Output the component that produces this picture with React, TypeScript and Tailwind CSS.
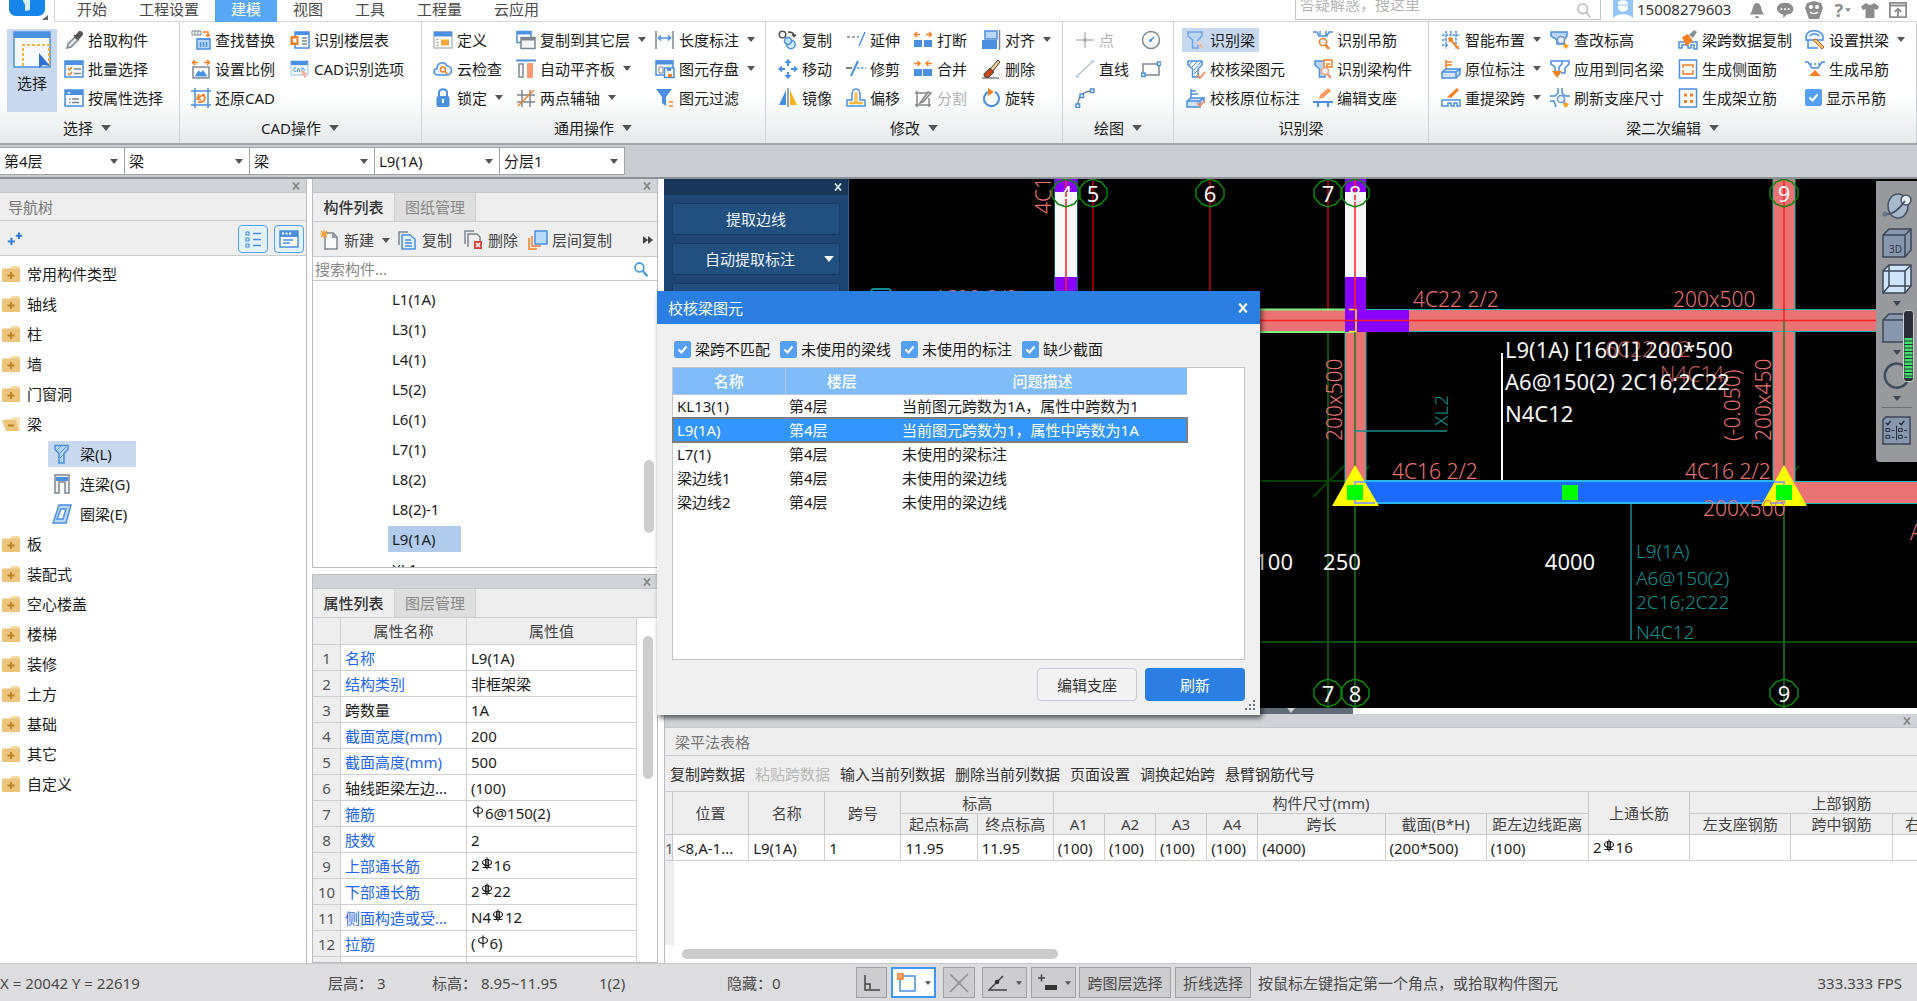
import React from 'react';
import type { ReactNode } from 'react';

const B = '#4a8fe0';
const L = '#b9d6f7';
const O = '#f58026';
const G = '#7d8790';

type IconProps = { children: ReactNode; box?: string; size?: string };
const Ico = ({ children, box = '0 0 20 20', size = 'size-5' }: IconProps) => (
  <svg viewBox={box} className={`${size} shrink-0`} fill="none" strokeWidth="1.5" aria-hidden="true">
    {children}
  </svg>
);

const Arrow = ({ className = 'h-[5px] w-2 text-[#555]' }: { className?: string }) => (
  <svg viewBox="0 0 8 5" className={`shrink-0 ${className}`} aria-hidden="true">
    <path d="M0 0h8L4 5z" fill="currentColor" />
  </svg>
);

const Cross = ({ className = 'size-2 text-[#858585]' }: { className?: string }) => (
  <svg viewBox="0 0 8 8" className={className} aria-hidden="true">
    <path d="M1 .5l6 7M7 .5l-6 7" stroke="currentColor" strokeWidth="1.8" />
  </svg>
);

const Magnifier = ({ c = O, x = 0, y = 0 }: { c?: string; x?: number; y?: number }) => (
  <g transform={`translate(${x} ${y})`} stroke={c}>
    <circle cx="11" cy="11" r="3.6" fill="#e8f0fb" />
    <path d="M13.5 14l3.5 4" strokeWidth="2.6" />
  </g>
);

const Beam = ({ fill = 'none', c = B }: { fill?: string; c?: string }) => (
  <path d="M2 2h14v4l-4 4v8H6.500v-8L2 6z" fill={fill} stroke={c} />
);

const icons: Record<string, ReactNode> = {
  pick: <Ico><path d="M3 18l1-4 7-7 3 3-7 7z" fill="#dfe5ea" stroke={G} /><path d="M10 5l5 5M11 7l4-5c2-1 4 1 3 3l-4 4z" fill="#555" stroke="#555" /></Ico>,
  batch: <Ico><path d="M1 2h18v16H1z" stroke={B} /><path d="M1 2h18v4H1z" fill={B} /><path d="M10 10h7M10 14.500h7" stroke={G} /><path d="M4 9.500l1.500 1.500 2.500-3M4 14.500l1.500 1.500 2.500-3" stroke={O} /></Ico>,
  prop: <Ico><path d="M1 2h18v16H1z" stroke={B} /><path d="M1 2h18v5H1z" fill={B} /><path d="M3 4h4L5 6z" fill="#fff" /><path d="M8 11h7M8 14.500h7" stroke={G} /><path d="M5 11h1.500M5 14.500h1.500" stroke={G} /></Ico>,
  find: <Ico><path d="M1 1h9v4H1zM4 1v4M7 1v4" stroke={G} strokeWidth="1" /><path d="M12 2h5v4M15 4.500l2 2 2-2" stroke={O} /><path d="M6 9h13v10H6z" fill={L} stroke={B} /><path d="M6 9h13M9.500 12v5M12.500 12v5M15.500 12v5" stroke={B} /></Ico>,
  scale: <Ico><path d="M2 3.500h5M18 3.500h-5M4 1L1.500 3.500 4 6M16 1l2.500 2.500L16 6" stroke={O} /><path d="M2 8h16v11H2z" stroke={G} fill="#fff" /><path d="M3.500 17.500l4-6 2.500 2 2-2.500 4.500 6.500z" fill={B} /></Ico>,
  restore: <Ico><path d="M4 0v20M0 3h20M17 0v20M0 17h20" stroke={B} /><path d="M7 14c6 1 8-2 6-7M13.500 6L7 10M8 6l-2 5 4 1" stroke={O} strokeWidth="1.800" /></Ico>,
  floor: <Ico><path d="M5 2h14v16H5z" fill="#fff" stroke={B} /><path d="M5 2h14v3H5z" fill={B} /><path d="M12 8h5M12 11h5M12 14h5" stroke={G} /><path d="M.5 6h8v9h-8z" fill={O} /><path d="M3 8.500h3.500v4H3z" fill="#fff" /></Ico>,
  cadopt: <Ico><path d="M1 2h17v14H1z" fill="#eef5fd" stroke={L} /><path d="M1 2h17v4H1z" fill={B} /><path d="M6 9c-3-1-3 4 0 3.500M7 13l1.500-4 1.500 4M12 9v4c3 0 3-4 0-4" stroke={B} strokeWidth="1" /><path d="M12 11l6 4-3 .5 1.500 3-2 .5-1-3-2 1z" fill="#f8b69a" /></Ico>,
  define: <Ico><path d="M1 2h18v16H1z" fill="#fff" stroke="#b5bcc4" /><path d="M1 1.500h18v5H1z" fill={B} /><path d="M8 9.500h8v6H8z" fill="#f5a93a" /><path d="M3 9.500h3M3 12.500h3M3 15.500h3" stroke="#bbb" /></Ico>,
  cloud: <Ico><path d="M5 16c-5 0-5-6-1-6.500C4 3 12 2 14 7c6 0 6 9 0 9z" fill="#eef6ff" stroke={B} /><circle cx="10" cy="10.500" r="2.500" stroke={O} /><path d="M12 12.500l2.500 2.500" stroke={O} /></Ico>,
  lock: <Ico><path d="M6 9V5c0-5 8-5 8 0v4" stroke={B} strokeWidth="2" /><rect x="3.500" y="8" width="13" height="11" rx="2" fill={B} /><path d="M10 11v4" stroke="#fff" strokeWidth="2" /></Ico>,
  layers: <Ico><path d="M1 1.500h14v11H1z" fill="#fff" stroke={B} /><path d="M1 1.500h14v3H1z" fill={B} /><path d="M5 7.500h14v11H5z" fill="#f3f5f7" stroke={G} /><path d="M5 7.500h14v3H5z" fill={G} /></Ico>,
  align: <Ico><path d="M0 1.500h20" stroke={B} strokeWidth="2" /><path d="M3 5h4v13H3z" stroke={G} /><path d="M11 4h6v15h-6z" fill="#fb9a70" /></Ico>,
  axis: <Ico><path d="M6 2v17M14 2v17M1 7h18M1 14h18" stroke={G} /><path d="M2 18L18 2" stroke={O} /></Ico>,
  length: <Ico><path d="M1 1v18M18 1v18" stroke={G} /><path d="M4 8h11M6 5.500L3.500 8 6 10.500M13 5.500L15.500 8 13 10.500" stroke={B} /></Ico>,
  save: <Ico><path d="M1 2h17v14H1z" stroke={B} fill="#fff" /><path d="M1 1.500h17v4H1z" fill={B} /><path d="M4 8h4v6H4z" stroke={G} strokeWidth="1" /><path d="M9.500 9h9.500v9.500H9.500z" fill="#fff" stroke={B} /><path d="M12 9h4v3h-4z" fill={B} /><path d="M13 15h4v3h-4z" fill={O} /></Ico>,
  filter: <Ico><path d="M1 1h16l-6 8v9l-4-3V9z" fill={B} /><path d="M14 14h4M14 18h4" stroke={O} /></Ico>,
  copy: <Ico><circle cx="4.500" cy="4.500" r="3.300" stroke="#555" /><path d="M10 2c4 0 6 1 6 4M14 4.500l2 2 2-2" stroke="#444" /><circle cx="13" cy="14.500" r="4.200" fill="#d5ecff" stroke={B} /><circle cx="10" cy="11" r="3.500" fill="#bfe0fb" stroke={B} /></Ico>,
  extend: <Ico><path d="M1 7h12" stroke={G} strokeDasharray="3 2" /><path d="M13 16l6-14" stroke={B} /></Ico>,
  break: <Ico><path d="M1 4.500h6M4 2L1.500 4.500 4 7M19 4.500h-6M16 2l2.500 2.500L16 7" stroke={O} /><path d="M1 10h8v7H1zM11 10h8v7h-8z" fill={B} /></Ico>,
  justify: <Ico><path d="M4 1h12v8H4z" fill={L} stroke={B} /><path d="M1 10h15v9H1z" fill={B} /><path d="M18.500 0v20" stroke={G} /></Ico>,
  move: <Ico><path d="M10 1v6M10 13v6M1 10h6M13 10h6" stroke={B} strokeWidth="2" /><path d="M10 0l3.500 4h-7zM10 20l3.500-4h-7zM0 10l4-3.500v7zM20 10l-4-3.500v7z" fill={B} /></Ico>,
  trim: <Ico><path d="M0 9h6" stroke="#555" /><path d="M11 9h9" stroke={B} strokeDasharray="2.500 1.500" /><path d="M5 17l7-15" stroke={B} strokeWidth="2" /></Ico>,
  merge: <Ico><path d="M1 4.500h6M4.500 2L7 4.500 4.500 7M19 4.500h-6M15.500 2L13 4.500 15.500 7" stroke={O} /><path d="M1 10h8v7H1zM10 10h9v7h-9z" fill={B} /></Ico>,
  erase: <Ico><path d="M1 19h17" stroke={G} /><path d="M17 1l2 2-7 9-3-2z" fill="#f0c992" stroke="#444" strokeWidth="1" /><path d="M9 9l4 4-5 5c-6 2-6-4-3-5z" fill="#c4491d" stroke="#444" strokeWidth="1" /></Ico>,
  mirror: <Ico><path d="M8 2v15H1z" fill={B} /><path d="M12 2v15h7z" fill="#f8b01c" /><path d="M10 0v19" stroke={G} /></Ico>,
  offset: <Ico><path d="M1 18v-6h5V7c0-8 8-8 8 0v5h5v6z" fill="#fff" stroke={B} /><path d="M4 15.500v-1h5V7c0-3 2-3 2 0v7.500h5v1z" stroke="#f5b53c" /></Ico>,
  split: <Ico><path d="M2 5h16M2 17h16M4 3v16M16 10v9" stroke="#888" /><path d="M7 15l8-11 3 1-8 9z" fill="#ddd" stroke="#888" /></Ico>,
  rotate: <Ico><path d="M7 4a7.500 7.500 0 1 0 7 0" stroke={B} strokeWidth="2" /><path d="M7 0l6 4-6 4z" fill={O} /></Ico>,
  point: <Ico><path d="M10 2v16M1 10h18" stroke="#bbb" /><circle cx="10" cy="10" r="2" fill="#aaa" /></Ico>,
  line: <Ico><path d="M2 17L17 3" stroke="#b8c0c8" /><path d="M1 16h3v3H1zM16 1h3v3h-3z" fill={L} /></Ico>,
  arc: <Ico><path d="M3 17C3 9 8 3 17 3" stroke={G} /><path d="M1 16h3.500v3.500H1zM15.500 1H19v3.500h-3.500zM5 6h3.500v3.500H5z" fill="#fff" stroke={B} /></Ico>,
  circle: <Ico><circle cx="10" cy="10" r="8.500" stroke={G} /><path d="M10 10l3-3" stroke={B} /><circle cx="9.500" cy="10.500" r="1.500" fill={B} /></Ico>,
  rect: <Ico><path d="M2 5h16v11H2z" stroke={G} /><path d="M16.500 3H20v3.500h-3.500zM.5 14H4v3.500H.5z" fill="#fff" stroke={B} /></Ico>,
  idBeam: <Ico><g opacity=".7"><Beam fill={L} /></g><circle cx="13" cy="13" r="2" fill="#fbd3c2" /><path d="M13.500 14l3 4" stroke="#f8b69a" strokeWidth="2" /></Ico>,
  checkBeam: <Ico><Beam fill="#fff" /><path d="M3 6l4-4M6 8l6-6M8 11l7-8M8 15l3-3" stroke={B} strokeWidth="1" /><path d="M11 16l3 3 5-6" stroke="#f58a62" strokeWidth="1.800" /></Ico>,
  checkMark: <Ico><path d="M5 1v9M5 3h5M5 6h7" stroke={B} /><path d="M1 13l4-3h12l-3 3v6H1zM1 13h13l4-3v5" fill="#cfe2f8" stroke={B} /><path d="M11 15l3 3 5-6" stroke="#f58a62" strokeWidth="1.800" /></Ico>,
  idHanger: <Ico><path d="M0 2h4l2 4h8l2-4h4M7 1v4M13 1v4" stroke={B} /><Magnifier y={1} x={-1} /></Ico>,
  idMember: <Ico><Beam fill={L} /><path d="M11 9V1h8v7h-5V5h3" stroke={O} fill="#fff" /><Magnifier x={1} y={1} c="#f59b76" /></Ico>,
  editSup: <Ico><path d="M0 14h20M5 14v5M15 14v5" stroke={B} strokeWidth="2" /><path d="M6 11l1-4 8-7 3 3-8 7z" fill="#f59b60" /></Ico>,
  smart: <Ico><path d="M5 1v18M10 1v5M15 1v18M1 5h18M1 10h5M1 15h7" stroke={B} strokeDasharray="2.500 1" /><path d="M8 8l10 11M8 8l4 1M8 8l1 4" stroke={O} strokeWidth="2" /></Ico>,
  origin: <Ico><path d="M5 1v9M5 3h6M5 6h6" stroke={O} /><path d="M1 13l4-3h14l-4 3v6H1zM1 13h14l4-3v5l-4 4" fill="#cfe2f8" stroke={B} /></Ico>,
  respan: <Ico><path d="M1 18v-6h18v6h-3v-3h-3v3h-3v-3H7v3z" fill="#fff" stroke={B} /><path d="M6 9l10-9 2 2-8 8z" fill={O} /></Ico>,
  elev: <Ico><path d="M1 2h16v4l-3 4v4H7v-4L1 6z" fill={L} stroke={B} /><Magnifier y={-1} c="#7592c4" /><path d="M15 13l4 3-3 3-3-3z" fill="#f7a520" /></Ico>,
  apply: <Ico><path d="M1 2h11v3l-3 3v5H5V8L1 5zM9 2h10v3l-4 4v5h-4" fill="#fff" stroke={B} /><path d="M2 12h10l-5 7z" fill={O} /></Ico>,
  refresh: <Ico><path d="M8 0v5l-3 3H0M12 0v5l3 3h5M0 13h4l2 6M8 3v3M12 3v3" stroke={B} /><Magnifier c="#6d93d6" /><path d="M15 14l4 2-3 4-3-3z" fill="#f7a520" /></Ico>,
  spanCopy: <Ico><path d="M1 18v-6h18v7h-3v-4h-3v3h-3v-3H4v3z" fill="#fff" stroke={B} /><path d="M4 7l6-3 5 7-7 5z" fill={O} /><path d="M11 5l5-5 3 2-4 6z" fill="#8a9299" /></Ico>,
  side: <Ico><path d="M1.500 1h17v18h-17z" stroke={B} fill="#fff" /><path d="M5 9V6h10v3M5 11v4h10v-4" stroke={O} /></Ico>,
  stand: <Ico><path d="M1.500 1h17v18h-17z" stroke={B} fill="#fff" /><path d="M6 5.500h3v3H6zM12 5.500h3v3h-3zM6 12h3v3H6zM12 12h3v3h-3z" fill={O} /></Ico>,
  arch: <Ico><path d="M1 6c2-7 14-7 17 0v4H1zM5 6c2-3 7-3 9 0M3 10v8h10" fill="#eef6ff" stroke={B} /><path d="M8 10l3-1 8 8-2 2z" fill="#f7c87a" stroke="#c55b1c" strokeWidth="1" /></Ico>,
  hanger: <Ico><path d="M0 3h3l4 6h6l4-6h3M6 4v2M10 4v2M14 4v2" stroke={B} /><path d="M10 11l6 6H4z" fill={O} /></Ico>,
};

type Item = { icon: string; label?: string; arrow?: boolean; off?: boolean; on?: boolean };
type Column = { w: string; items: Item[] };

const RibbonButton = ({ icon, label, arrow, off, on }: Item) => (
  <div className="flex h-[29px] items-center">
    <button
      aria-label={label ?? icon}
      className={`-mx-1 flex h-6 items-center gap-1 px-1 whitespace-nowrap ${off ? 'text-[#aeb0b2]' : ''} ${on ? 'bg-[#c8d8ee]' : ''}`}
    >
      {icons[icon]}
      {label}
      {arrow && <span className="ml-1"><Arrow /></span>}
    </button>
  </div>
);

const Group = ({ title, cls, cols, lead, noArrow, tail }: { title: string; cls: string; cols: Column[]; lead?: ReactNode; noArrow?: boolean; tail?: ReactNode }) => (
  <section className={`flex shrink-0 flex-col border-r border-[#cfd3d6] pt-[3px] ${cls}`}>
    <div className="flex h-[88px]">
      {lead}
      {cols.map((c, i) => (
        <div key={i} className={`shrink-0 ${c.w}`}>
          {c.items.map((it) => <RibbonButton key={it.icon} {...it} />)}
          {i === cols.length - 1 && tail}
        </div>
      ))}
    </div>
    <div className="-ml-3 flex h-[30px] items-center justify-center gap-2">
      {title}
      {!noArrow && <Arrow className="h-1.5 w-2.5 text-[#555]" />}
    </div>
  </section>
);

const Check = ({ label }: { label: string }) => (
  <label className="relative flex items-center gap-1 whitespace-nowrap">
    <input type="checkbox" defaultChecked className="size-[17px] appearance-none rounded-xs bg-[#55a0f5]" />
    <svg viewBox="0 0 17 17" className="pointer-events-none absolute left-0 size-[17px]" fill="none" aria-hidden="true">
      <path d="M4.500 8.500l3 3 5-6" stroke="#fff" strokeWidth="2" />
    </svg>
    {label}
  </label>
);

const PanelStrip = () => (
  <div className="flex h-[14px] shrink-0 items-center justify-end border-b border-[#c4c6ca] bg-[#d2d3d8] pr-1.5">
    <button aria-label="关闭"><Cross /></button>
  </div>
);

const tabs = ['开始', '工程设置', '建模', '视图', '工具', '工程量', '云应用'];

const TopBar = () => (
  <header className="flex h-[22px] shrink-0">
    <div className="relative flex w-[54px] shrink-0 items-start justify-center">
      <svg viewBox="0 0 36 16" className="h-4 w-9 shrink-0" aria-hidden="true">
        <path d="M0 0h36v9c0 4-3 7-7 7H7c-4 0-7-3-7-7z" fill="#1585ea" />
        <path d="M14 0c0 3 2 3 2 5v6l5-1V0z" fill="#d8eeff" />
      </svg>
      <svg viewBox="0 0 6 5" className="absolute right-1.5 bottom-0.5 h-[5px] w-1.5" aria-hidden="true"><path d="M6 0v5H0z" fill="#666" /></svg>
    </div>
    <nav className="flex min-w-0 flex-1 items-start border-b border-l border-[#d3d5d8] pl-[6px]">
      {tabs.map((t) => (
        <button key={t} className={`h-[22px] px-4 pb-1 leading-[18px] ${t === '建模' ? 'bg-[#58a7f6] text-white' : 'text-[#4a4a4a]'}`}>{t}</button>
      ))}
    </nav>
    <div className="flex items-start border-b border-[#d3d5d8] pr-2.5">
      <label className="flex h-[20px] w-[306px] items-center border border-t-0 border-[#c3c5c8] pr-2">
        <input aria-label="搜索" placeholder="答疑解惑，搜这里" className="-mt-3 h-5 min-w-0 flex-1 px-1 placeholder:text-[#b5b5b5]" />
        <Ico size="size-4"><circle cx="8.500" cy="8.500" r="6" stroke="#bbb" strokeWidth="2" /><path d="M13 13l5 6" stroke="#bbb" strokeWidth="2" /></Ico>
      </label>
      <svg viewBox="0 0 20 18" className="ml-3 h-[18px] w-5" aria-hidden="true">
        <path d="M0 0h20v18H0z" fill="#93c6fa" /><path d="M5 4c0-5 10-5 10 0v4c-1 5-9 5-10 0zM1 18c1-5 17-5 18 0z" fill="#fff" /><path d="M5 5h10" stroke="#93c6fa" />
      </svg>
      <span className="ml-1 leading-[18px] text-[#333]">15008279603</span>
      <div className="ml-[17px] flex items-center gap-2.5 text-[#8c8c8c]">
        <button aria-label="通知"><Ico size="size-[18px]"><path d="M2 15c4-3 2-12 8-13 6 1 4 10 8 13zM8 17h4v2H8z" fill="currentColor" /></Ico></button>
        <button aria-label="消息"><Ico size="size-[18px]"><path d="M10 2c12 0 12 13 2 13l-4 4v-4C-2 13-1 2 10 2z" fill="currentColor" /><path d="M5 9h2M9 9h2M13 9h2" stroke="#fff" strokeWidth="2" /></Ico></button>
        <button aria-label="客服"><Ico size="size-[20px]"><path d="M1 8l2-5 7-2 7 2 2 5-4 11H5z" fill="currentColor" /><circle cx="7" cy="7" r="2" fill="#fff" /><circle cx="13" cy="7" r="2" fill="#fff" /><path d="M6 12c2 2 6 2 8 0" stroke="#fff" /></Ico></button>
        <button aria-label="帮助" className="flex items-center gap-0.5 text-lg leading-[18px] font-bold">?<Arrow className="h-1 w-1.5 text-[#8c8c8c]" /></button>
        <button aria-label="皮肤"><Ico size="size-[18px]"><path d="M6 2c1 3 7 3 8 0l6 4-2 4-3-1v10H5V9l-3 1-2-4z" fill="currentColor" /></Ico></button>
        <button aria-label="收起"><Ico size="size-[18px]"><path d="M1 2h18v16H1zM1 5h18M10 17V9M6.500 12L10 8.500l3.500 3.500" stroke="currentColor" strokeWidth="2" /></Ico></button>
      </div>
    </div>
  </header>
);

const Ribbon = () => (
  <div className="flex h-[123px] shrink-0 overflow-hidden border-b-2 border-[#a2a5a9] bg-linear-to-b from-white from-60% to-[#e6eaeb]">
    <Group
      title="选择"
      cls="w-[180px] pl-[7px]"
      lead={
        <button className="mt-1 mr-[7px] flex h-[83px] w-[50px] flex-col items-center bg-[#c8d8ee] pt-0.5">
          <Ico size="size-[38px]" box="0 0 38 38">
            <path d="M1 1h36v35H1z" fill="#f7faff" stroke={B} /><path d="M1 1h36v6H1z" fill={B} />
            <path d="M10 35V14h26v22" stroke="#f5b53c" strokeWidth="2" strokeDasharray="3 2" /><path d="M26 22v15l4-3 7 1z" fill="#2f6fd0" />
          </Ico>
          <span className="mt-1 leading-5">选择</span>
        </button>
      }
      cols={[{ w: 'w-auto', items: [{ icon: 'pick', label: '拾取构件' }, { icon: 'batch', label: '批量选择' }, { icon: 'prop', label: '按属性选择' }] }]}
    />
    <Group
      title="CAD操作"
      cls="w-[242px] pl-[11px]"
      cols={[
        { w: 'w-[99px]', items: [{ icon: 'find', label: '查找替换' }, { icon: 'scale', label: '设置比例' }, { icon: 'restore', label: '还原CAD' }] },
        { w: 'w-auto', items: [{ icon: 'floor', label: '识别楼层表' }, { icon: 'cadopt', label: 'CAD识别选项' }] },
      ]}
    />
    <Group
      title="通用操作"
      cls="w-[344px] pl-[11px]"
      cols={[
        { w: 'w-[83px]', items: [{ icon: 'define', label: '定义' }, { icon: 'cloud', label: '云检查' }, { icon: 'lock', label: '锁定', arrow: true }] },
        { w: 'w-[139px]', items: [{ icon: 'layers', label: '复制到其它层', arrow: true }, { icon: 'align', label: '自动平齐板', arrow: true }, { icon: 'axis', label: '两点辅轴', arrow: true }] },
        { w: 'w-auto', items: [{ icon: 'length', label: '长度标注', arrow: true }, { icon: 'save', label: '图元存盘', arrow: true }, { icon: 'filter', label: '图元过滤' }] },
      ]}
    />
    <Group
      title="修改"
      cls="w-[297px] pl-3"
      cols={[
        { w: 'w-[68px]', items: [{ icon: 'copy', label: '复制' }, { icon: 'move', label: '移动' }, { icon: 'mirror', label: '镜像' }] },
        { w: 'w-[67px]', items: [{ icon: 'extend', label: '延伸' }, { icon: 'trim', label: '修剪' }, { icon: 'offset', label: '偏移' }] },
        { w: 'w-[68px]', items: [{ icon: 'break', label: '打断' }, { icon: 'merge', label: '合并' }, { icon: 'split', label: '分割', off: true }] },
        { w: 'w-auto', items: [{ icon: 'justify', label: '对齐', arrow: true }, { icon: 'erase', label: '删除' }, { icon: 'rotate', label: '旋转' }] },
      ]}
    />
    <Group
      title="绘图"
      cls="w-[111px] pl-3"
      cols={[
        { w: 'w-[66px]', items: [{ icon: 'point', label: '点', off: true }, { icon: 'line', label: '直线' }, { icon: 'arc' }] },
        { w: 'w-auto', items: [{ icon: 'circle' }, { icon: 'rect' }] },
      ]}
    />
    <Group
      title="识别梁"
      noArrow
      cls="w-[255px] pl-3"
      cols={[
        { w: 'w-[127px]', items: [{ icon: 'idBeam', label: '识别梁', on: true }, { icon: 'checkBeam', label: '校核梁图元' }, { icon: 'checkMark', label: '校核原位标注' }] },
        { w: 'w-auto', items: [{ icon: 'idHanger', label: '识别吊筋' }, { icon: 'idMember', label: '识别梁构件' }, { icon: 'editSup', label: '编辑支座' }] },
      ]}
    />
    <Group
      title="梁二次编辑"
      cls="flex-1 pl-3"
      tail={<div className="flex h-[29px] items-center"><Check label="显示吊筋" /></div>}
      cols={[
        { w: 'w-[109px]', items: [{ icon: 'smart', label: '智能布置', arrow: true }, { icon: 'origin', label: '原位标注', arrow: true }, { icon: 'respan', label: '重提梁跨', arrow: true }] },
        { w: 'w-[128px]', items: [{ icon: 'elev', label: '查改标高' }, { icon: 'apply', label: '应用到同名梁' }, { icon: 'refresh', label: '刷新支座尺寸' }] },
        { w: 'w-[127px]', items: [{ icon: 'spanCopy', label: '梁跨数据复制' }, { icon: 'side', label: '生成侧面筋' }, { icon: 'stand', label: '生成架立筋' }] },
        { w: 'w-auto', items: [{ icon: 'arch', label: '设置拱梁', arrow: true }, { icon: 'hanger', label: '生成吊筋' }] },
      ]}
    />
  </div>
);

const pickers = [['楼层', '第4层'], ['构件大类', '梁'], ['构件类型', '梁'], ['构件', 'L9(1A)'], ['分层', '分层1']];

const PickerBar = () => (
  <div className="flex h-[34px] shrink-0 items-center border-b-2 border-[#8d9095] bg-[#c9ccd1]">
    {pickers.map(([name, v]) => (
      <div key={name} className="relative w-[125px] border border-l-0 border-[#a0a3a8]">
        <select aria-label={name} className="block h-[26px] w-full appearance-none bg-white pl-1 leading-[22px]">
          <option>{v}</option>
        </select>
        <span className="pointer-events-none absolute inset-y-0 right-1.5 flex items-center"><Arrow /></span>
      </div>
    ))}
  </div>
);

const Folder = ({ open = false }: { open?: boolean }) => (
  <Ico size="h-4 w-[18px]" box="0 0 18 16">
    {open ? (
      <><path d="M3 3h6l2-2h7v14H4z" fill="#f8e2b4" /><path d="M0 4h14l3 11H4z" fill="#ecc47c" /><path d="M6 9.500h6" stroke="#b98225" strokeWidth="2" /></>
    ) : (
      <><path d="M8 2l2-2h7l1 2v2H8z" fill="#f5dca8" /><rect y="2.500" width="18" height="13.500" rx="1" fill="#ecc47c" /><path d="M5.500 9.500h7M9 6v7" stroke="#b98225" strokeWidth="1.800" /></>
    )}
  </Ico>
);

const before = ['常用构件类型', '轴线', '柱', '墙', '门窗洞'];
const after = ['板', '装配式', '空心楼盖', '楼梯', '装修', '土方', '基础', '其它', '自定义'];
const TreeRow = ({ name, open }: { name: string; open?: boolean }) => (
  <li className="flex h-[30px] items-center gap-[7px] pl-0.5"><Folder open={open} />{name}</li>
);

const subs: [string, ReactNode][] = [
  ['梁(L)', <Ico key="l"><path d="M3 1.500h13v4l-4 4V19H7V9.500l-4-4z" fill={L} stroke={B} /><path d="M5 6l4-4M8 9l6-6M8 14l4-4" stroke={B} strokeWidth="1" /></Ico>],
  ['连梁(G)', <Ico key="g"><path d="M3 1h14v18h-4V8H7v11H3z" fill="#f0f2f4" stroke={G} /><path d="M4 3h12v4H4z" fill={B} /></Ico>],
  ['圈梁(E)', <Ico key="e"><path d="M7 1h12l-5 18H1z" fill={L} stroke={B} /><path d="M9 5h5l-3 10H5z" fill="#fff" stroke={B} /></Ico>],
];

const NavTree = () => (
  <aside className="flex w-[307px] shrink-0 flex-col border-r border-[#b9bcc0] bg-white">
    <PanelStrip />
    <h2 className="flex h-[28px] shrink-0 items-center border-b border-[#c8cace] bg-[#eeeeee] pl-2 text-[#777]">导航树</h2>
    <div className="flex h-[35px] shrink-0 items-center gap-1.5 border-b border-[#c8cace] bg-[#eeeeee] pt-px pr-0.5 pl-[7px]">
      <Ico size="size-4"><path d="M1 13h9M5.500 8.500v9M11 6h8M15 2v8" stroke="#2f7ddb" strokeWidth="2.500" /></Ico>
      <span className="flex-1" />
      <button aria-label="列表" className="flex h-7 w-[30px] items-center justify-center rounded-sm border border-[#55a0f5] bg-[#e4f1ff]">
        <Ico><path d="M3 3h3v3H3zM3 9h3v3H3zM3 15h3v3H3z" stroke={B} strokeWidth="1.200" /><path d="M10 4.500h8M10 10.500h8M10 16.500h8" stroke={B} /></Ico>
      </button>
      <button aria-label="卡片" className="flex h-7 w-[30px] items-center justify-center rounded-sm border border-[#55a0f5] bg-[#e4f1ff]">
        <Ico><path d="M1 2h18v16H1z" fill="#fff" stroke={B} /><path d="M1 2h18v6H1z" fill={B} /><path d="M4 11h10M4 14h7" stroke={B} /><path d="M3 4.500h9" stroke="#fff" strokeWidth="2" strokeDasharray="2 1.500" /></Ico>
      </button>
    </div>
    <ul className="pt-[3px]">
      {before.map((n) => <TreeRow key={n} name={n} />)}
      <TreeRow name="梁" open />
      {subs.map(([n, icon], i) => (
        <li key={n} className="flex h-[30px] items-center pl-12">
          <span className={`flex h-[26px] w-[88px] items-center gap-2 pl-1 ${i === 0 ? 'bg-[#c8d8ee]' : ''}`}>{icon}{n}</span>
        </li>
      ))}
      {after.map((n) => <TreeRow key={n} name={n} />)}
    </ul>
  </aside>
);

const PanelTabs = ({ names }: { names: [string, string] }) => (
  <div className="flex h-[29px] shrink-0 border-b border-[#c8cace] bg-[#eeeeee]" role="tablist">
    <button role="tab" className="w-[81px] font-medium text-[#333]">{names[0]}</button>
    <button role="tab" className="w-[82px] border-x border-[#cfcfcf] bg-[#dedede] text-[#888]">{names[1]}</button>
  </div>
);

const members = ['L1(1A)', 'L3(1)', 'L4(1)', 'L5(2)', 'L6(1)', 'L7(1)', 'L8(2)', 'L8(2)-1', 'L9(1A)', 'XL1'];

const ComponentList = () => (
  <section className="flex h-[389px] shrink-0 flex-col border border-t-0 border-[#b9bcc0] bg-white">
    <PanelStrip />
    <PanelTabs names={['构件列表', '图纸管理']} />
    <div className="flex h-[35px] shrink-0 items-center border-b border-[#c8cace] bg-[#eeeeee] pt-0.5 pr-1 pl-[7px] whitespace-nowrap text-[#444]">
      <button className="flex items-center gap-1"><Ico><path d="M5 3h8l4 4v12H5z" fill="#fafafa" stroke={G} /><path d="M13 3v4h4" stroke={G} /><path d="M4 0v8M0 4h8M1 1l6 6M7 1L1 7" stroke="#f0a030" strokeWidth="1.200" /></Ico>新建<span className="ml-1"><Arrow /></span></button>
      <button className="ml-2 flex items-center gap-1"><Ico><path d="M1 15V2h9" stroke={G} /><path d="M4 5h8l5 4v10H4z" fill="#e3effc" stroke={B} /><path d="M7 10h6M7 13h7M7 16h7" stroke={B} /></Ico>复制</button>
      <button className="ml-3 flex items-center gap-1"><Ico><path d="M1 14V1h9M4 17V4h9l3 3v4" stroke={G} /><path d="M10 11h8v8h-8z" fill="#d6463f" /><path d="M12 13l4 4M16 13l-4 4" stroke="#fff" /></Ico>删除</button>
      <button className="ml-2.5 flex items-center gap-1"><Ico><path d="M1 8v11h8M4 6v10h9" stroke={O} /><path d="M7 1h12v13H7z" fill="#b9d9fb" stroke={B} /></Ico>层间复制</button>
      <span className="flex-1" />
      <button aria-label="更多"><svg viewBox="0 0 10 8" className="h-2 w-2.5" aria-hidden="true"><path d="M0 0l5 4-5 4zM5 0l5 4-5 4z" fill="#444" /></svg></button>
    </div>
    <div className="flex h-6 shrink-0 items-center border-b border-[#c8cace] pr-2">
      <input aria-label="搜索构件" placeholder="搜索构件..." className="h-5 min-w-0 flex-1 px-0.5 placeholder:text-[#888]" />
      <Ico size="size-4"><circle cx="8" cy="8" r="5.500" stroke="#4d9fd8" strokeWidth="2.200" /><path d="M12 12l6 7" stroke="#4d9fd8" strokeWidth="3" /></Ico>
    </div>
    <div className="flex min-h-0 flex-1 overflow-hidden pt-[3px]">
      <ul className="flex-1 pl-[75px]">
        {members.map((m) => (
          <li key={m} className="flex h-[30px] items-center">
            <span className={`h-[26px] pl-1 leading-[26px] ${m === 'L9(1A)' ? 'w-[73px] bg-[#b1cbec]' : ''}`}>{m}</span>
          </li>
        ))}
      </ul>
      <div className="mt-[176px] mr-[3px] h-[73px] w-2.5 rounded-full bg-[#cdcdcd]" />
    </div>
  </section>
);

const Rebar = ({ heavy = false }: { heavy?: boolean }) => (
  <svg viewBox="0 0 12 13" className="mx-px mb-1.5 inline h-[13px] w-3 align-middle" fill="none" stroke="#222" strokeWidth="1.2" aria-label={heavy ? 'C' : 'A'}>
    <ellipse cx="6" cy="5.500" rx="4.500" ry="3" /><path d="M6 .5v12" />{heavy && <><path d="M3.500 8.500h5M1.500 10.500h9M4.500 2v8M7.500 2v8" strokeWidth="1" /></>}
  </svg>
);

const props: [string, ReactNode, boolean][] = [
  ['名称', 'L9(1A)', true],
  ['结构类别', '非框架梁', true],
  ['跨数量', '1A', false],
  ['截面宽度(mm)', '200', true],
  ['截面高度(mm)', '500', true],
  ['轴线距梁左边...', '(100)', false],
  ['箍筋', <><Rebar />6@150(2)</>, true],
  ['肢数', '2', true],
  ['上部通长筋', <>2<Rebar heavy />16</>, true],
  ['下部通长筋', <>2<Rebar heavy />22</>, true],
  ['侧面构造或受...', <>N4<Rebar heavy />12</>, true],
  ['拉筋', <>(<Rebar />6)</>, true],
];

const PropertyList = () => (
  <section className="flex min-h-0 flex-1 flex-col border border-[#b9bcc0] bg-white">
    <PanelStrip />
    <PanelTabs names={['属性列表', '图层管理']} />
    <div className="flex min-h-0 flex-1 items-start overflow-hidden">
      <table className="w-[324px] table-fixed border-separate border-spacing-0">
        <colgroup><col className="w-[28px]" /><col className="w-[126px]" /><col className="w-[170px]" /></colgroup>
        <thead>
          <tr className="h-[27px] bg-[#eeeeee] text-[#444]">
            {['', '属性名称', '属性值'].map((h) => <th key={h} scope="col" className="border-r border-b border-[#cfcfcf] font-normal">{h}</th>)}
          </tr>
        </thead>
        <tbody>
          {props.map(([n, v, blue], i) => (
            <tr key={n} className="h-[26px]">
              <td className="border-r border-b border-[#cfcfcf] bg-[#eeeeee] text-center text-[#555]">{i + 1}</td>
              <td className={`border-r border-b border-[#cfcfcf] pl-1 whitespace-nowrap ${blue ? 'text-[#2364f0]' : ''}`}>{n}</td>
              <td className="border-r border-b border-[#cfcfcf] pl-1">{v}</td>
            </tr>
          ))}
          <tr className="h-[26px]"><td className="border-r border-[#cfcfcf] bg-[#eeeeee]" /><td className="border-r border-[#cfcfcf]" /><td className="border-r border-[#cfcfcf]" /></tr>
        </tbody>
      </table>
      <div className="mt-[18px] ml-1.5 h-[143px] w-2.5 rounded-full bg-[#cdcdcd]" />
    </div>
  </section>
);

const S = '#e97373';
const T = '#12908f';
const CAD = "'Noto Sans',sans-serif";
const axes: [number, number, string][] = [[1066, 193, '4'], [1093, 193, '5'], [1210, 193, '6'], [1328, 193, '7'], [1355, 193, '8'], [1784, 193, '9'], [1328, 693, '7'], [1355, 693, '8'], [1784, 693, '9']];

const Drawing = () => (
  <svg viewBox="849 179 1068 529" preserveAspectRatio="xMinYMin slice" className="h-full w-full" role="img" aria-label="梁平面图">
    <g fill="none" stroke="#063f06" strokeWidth="2">
      <path d="M1260 481h85M1313 497l31-31M1791 475l8-9M1361 475l8-9" />
      <path d="M1260 642h657M1328 331v377" stroke="#0a500a" />
    </g>
    <path d="M1093 179v130M1210 179v130M1328 179v141" stroke="#c00000" strokeWidth="1.500" />
    <g fill={S} stroke="#1fb5b0">
      <path d="M1055 179h22v150h-22zM1345 331h21v160h-21zM1773 179h22v310h-22z" />
      <path d="M1366 309.500h551v22h-551zM1784 481.500h140v22h-140z" />
    </g>
    <path d="M1774 310h20v21h-20z" fill={S} />
    <path d="M1240 309h116v23h-116z" fill={S} />
    <path d="M1240 309.500h116M1240 332h116" stroke="#7df07a" strokeWidth="2" />
    <g fill="#8a00ff"><path d="M1055 179h22v120h-22zM1345 179h21v153h-21zM1345 310h64v22h-64z" /></g>
    <path d="M1055 192h22v85h-22zM1345 192h21v85h-21z" fill="#f8f8f8" />
    <path d="M1349 309.500h7v22h-7" fill="none" stroke="#ffee00" strokeWidth="1.500" />
    <path d="M1066 179v130M1355 179v131M1784 179v142M1240 320.500h677" stroke="#ff2020" strokeWidth="1.500" />
    <path d="M1355 332v376M1784 321v387" stroke="#1d7a1d" strokeWidth="1.500" />

    <g fill={S} fontSize="21" fontWeight="300" fontFamily={CAD}>
      <text x="932" y="306">4C22 2/2</text>
      <text x="1413" y="307">4C22 2/2</text>
      <text x="1673" y="307">200x500</text>
      <text x="1392" y="479">4C16 2/2</text>
      <text x="1685" y="479">4C16 2/2</text>
      <g opacity=".75">
        <text x="1605" y="357">6C22 2/2</text>
        <text x="1660" y="382">N4C14</text>
      </g>
      <text transform="translate(1342 441) rotate(-90)">200x500</text>
      <text transform="translate(1771 441) rotate(-90)">200x450</text>
      <text transform="translate(1740 441) rotate(-90)">(-0.050)</text>
      <text transform="translate(1051 214) rotate(-90)">4C18</text>
      <text x="1910" y="540">A</text>
    </g>
    <rect x="871" y="289" width="20" height="14" rx="3" fill="none" stroke={T} strokeWidth="2" />
    <g fill={T} fontSize="19" fontWeight="300" fontFamily={CAD}>
      <text x="1636" y="558">L9(1A)</text>
      <text x="1636" y="585">A6@150(2)</text>
      <text x="1636" y="609">2C16;2C22</text>
      <text x="1636" y="639">N4C12</text>
      <text transform="translate(1448 426) rotate(-90)">XL2</text>
    </g>
    <path d="M1355 431h92M1631 494v146" stroke={T} strokeWidth="1.500" />
    <path d="M1502 353v128" stroke="#fff" strokeWidth="2" />

    <path d="M1355 481h429v22h-429z" fill="#1b6bff" stroke="#27b9f0" strokeWidth="2" />
    <path d="M1355 465l24 41h-47zM1784 465l23 41h-46z" fill="#ffff00" />
    <path d="M1365 482h-10v8M1355 499v4h20M1774 482h10v8M1784 499v4h-14" fill="none" stroke="#93a8d8" strokeWidth="2" />
    <path d="M1347 485h16v15h-16zM1562 485h16v15h-16zM1776 485h16v15h-16z" fill="#00ff00" />
    <text x="1703" y="516" fill={S} fontSize="21" fontWeight="300" fontFamily={CAD}>200x500</text>

    <g fill="#f5f5f5" fontSize="22" fontFamily="'Noto Sans'">
      <text x="1505" y="358">L9(1A) [1601] 200*500</text>
      <text x="1505" y="390">A6@150(2) 2C16;2C22</text>
      <text x="1505" y="422">N4C12</text>
      <text x="1293" y="570" textAnchor="end">100</text>
      <text x="1342" y="570" textAnchor="middle">250</text>
      <text x="1570" y="570" textAnchor="middle">4000</text>
      {axes.map(([x, y, n]) => (
        <g key={`${x}-${y}`}>
          <path d={`M${x} ${y - 14}l8 3 6 7v8l-6 7-8 3-8-3-6-7v-8l6-7z`} fill="none" stroke="#0b850b" strokeWidth="1.500" />
          <text x={x} y={y + 9} textAnchor="middle">{n}</text>
        </g>
      ))}
    </g>
  </svg>
);

const Cube = ({ light = false, label = '' }: { light?: boolean; label?: string }) => (
  <Ico size="size-[30px]" box="0 0 30 30">
    <path d="M1 7l6-6h22v21l-6 7H1z" fill={light ? '#cfe4fb' : '#8798ae'} stroke="#3b4658" />
    <path d="M1 7h22v22M23 7l6-6" stroke="#3b4658" />
    {light && <path d="M7 1v21h22M7 22l-6 7" stroke="#3b4658" />}
    {label && <text x="7" y="25" fontSize="10" fill="#2c3645" fontFamily="'Noto Sans'">{label}</text>}
  </Ico>
);

const ViewBar = () => (
  <div className="absolute top-0.5 right-0 flex h-[281px] w-[41px] flex-col items-center rounded-bl-sm bg-[#97999d] pt-2.5">
    <button aria-label="动态观察">
      <Ico size="size-[30px]" box="0 0 30 30"><ellipse cx="16" cy="15" rx="10" ry="12" fill="#a9b9cc" stroke="#465468" /><circle cx="24" cy="9" r="5" fill="#e5eef8" stroke="#465468" /><path d="M2 23c8 2 16-6 21-13" stroke="#465468" strokeWidth="2" /><circle cx="3" cy="23" r="2.500" fill="#65758c" /></Ico>
    </button>
    <button aria-label="三维" className="mt-[7px]"><Cube label="3D" /></button>
    <button aria-label="线框" className="mt-[6px]"><Cube light /></button>
    <span className="my-[7px]"><Arrow className="h-[5px] w-2 text-[#3b4658]" /></span>
    <button aria-label="视图"><Cube /></button>
    <span className="my-[7px]"><Arrow className="h-[5px] w-2 text-[#3b4658]" /></span>
    <button aria-label="旋转">
      <Ico size="size-[28px]" box="0 0 28 28"><path d="M21 4a12 12 0 1 0 4 14M21 4v5" stroke="#3f4b5c" strokeWidth="2.500" /></Ico>
    </button>
    <span className="my-[6px]"><Arrow className="h-[5px] w-2 text-[#3b4658]" /></span>
    <hr className="w-[30px] border-[#6d7177]" />
    <button aria-label="显示设置" className="mt-2">
      <Ico size="size-[29px]" box="0 0 30 30"><path d="M1 4l3-3h25v28H1z" fill="#8798ae" stroke="#3b4658" /><path d="M4 7l2 2 3-4M18 7l2 2 3-4" stroke="#222c3a" /><path d="M4 13h4v3H4zM4 20h4v3H4zM17 13h4v3h-4zM17 20h4v3h-4zM10 15h3M10 22h3M23 15h3M23 22h3M15 10v15" stroke="#222c3a" strokeWidth="1" /></Ico>
    </button>
    <svg viewBox="0 0 11 72" className="absolute top-[129px] right-[3px] h-[72px] w-[11px]" aria-hidden="true">
      <rect x=".5" y=".5" width="10" height="71" rx="3" fill="#2b2f35" stroke="#d0d0d0" />
      <path d="M5.500 28v40" stroke="#3fe06a" strokeWidth="8" strokeDasharray="2.500 1" />
    </svg>
  </div>
);

const Workspace = () => (
  <div className="relative flex min-h-0 flex-1 bg-black">
    <div className="w-[185px] shrink-0 border-r border-[#2c5f92] bg-[#1d4674]">
      <div className="flex h-4 items-center justify-end bg-[#17365a] pr-1.5"><button aria-label="关闭"><Cross className="size-2 text-[#dfe6ee]" /></button></div>
      <div className="flex flex-col gap-2 px-2 pt-2 text-[#eef3f8]">
        <button className="h-8 rounded-xs border border-[#163a62] bg-[#215080]">提取边线</button>
        <button className="relative h-8 rounded-xs border border-[#163a62] bg-[#215080]">
          <span className="mr-3">自动提取标注</span>
          <svg viewBox="0 0 8 5" className="absolute top-3 right-[5px] h-1.5 w-2.5" aria-hidden="true"><path d="M0 0h8L4 5z" fill="#fff" /></svg>
        </button>
        <button aria-label="识别梁" className="h-8 rounded-xs border border-[#163a62] bg-[#215080]" />
      </div>
    </div>
    <div className="min-w-0 flex-1"><Drawing /></div>
    <ViewBar />
  </div>
);

const th = 'border-r border-b border-[#c6c8cb] bg-[#eeeeee] font-normal text-[#444] p-0 truncate';
const td = 'border-r border-b border-[#d0d0d0] px-1 whitespace-nowrap overflow-hidden text-ellipsis';

const SpanTable = () => (
  <table className="w-[1329px] table-fixed border-separate border-spacing-0">
    <colgroup>
      <col className="w-[8px]" /><col className="w-[76px]" /><col className="w-[76px]" /><col className="w-[76px]" /><col className="w-[76px]" /><col className="w-[76px]" />
      <col className="w-[51px]" /><col className="w-[51px]" /><col className="w-[51px]" /><col className="w-[51px]" /><col className="w-[127px]" /><col className="w-[101px]" /><col className="w-[102px]" />
      <col className="w-[101px]" /><col className="w-[101px]" /><col className="w-[101px]" /><col className="w-[101px]" />
    </colgroup>
    <thead>
      <tr className="h-[22px]">
        <th rowSpan={2} className={th} />
        {['位置', '名称', '跨号'].map((h) => <th key={h} rowSpan={2} className={th}>{h}</th>)}
        <th colSpan={2} className={th}>标高</th>
        <th colSpan={7} className={th}>构件尺寸(mm)</th>
        <th rowSpan={2} className={th}>上通长筋</th>
        <th colSpan={3} className={th}>上部钢筋</th>
      </tr>
      <tr className="h-[21px]">
        {['起点标高', '终点标高', 'A1', 'A2', 'A3', 'A4', '跨长', '截面(B*H)', '距左边线距离', '左支座钢筋', '跨中钢筋', '右支座钢筋'].map((h) => <th key={h} className={th}>{h}</th>)}
      </tr>
    </thead>
    <tbody>
      <tr className="h-[26px]">
        <td className="border-r border-b border-[#c6c8cb] bg-[#eeeeee] p-0 text-[#555]">1</td>
        {['<8,A-1...', 'L9(1A)', '1', '11.95', '11.95', '(100)', '(100)', '(100)', '(100)', '(4000)', '(200*500)', '(100)'].map((v, i) => <td key={i} className={td}>{v}</td>)}
        <td className={td}>2<Rebar heavy />16</td>
        <td className={td} /><td className={td} /><td className={td} />
      </tr>
    </tbody>
  </table>
);

const actions = ['复制跨数据', '粘贴跨数据', '输入当前列数据', '删除当前列数据', '页面设置', '调换起始跨', '悬臂钢筋代号'];

const BottomPanel = () => (
  <section className="flex h-[249px] shrink-0 flex-col overflow-hidden border-l border-[#b9bcc0] bg-white">
    <PanelStrip />
    <h2 className="flex h-7 shrink-0 items-center border-b border-[#c8cace] bg-[#eeeeee] pl-[10px] text-[#777]">梁平法表格</h2>
    <div className="flex h-9 shrink-0 items-center gap-2.5 border-b border-[#c8cace] bg-[#eeeeee] pl-[5px] text-[#333]">
      {actions.map((a) => <button key={a} disabled={a === '粘贴跨数据'} className="disabled:text-[#b8b8b8]">{a}</button>)}
    </div>
    <div className="overflow-hidden"><SpanTable /></div>
    <div className="w-[9px] flex-1 bg-[#eeeeee]" />
    <div className="mt-1 mb-1 ml-[17px] h-2.5 w-[376px] shrink-0 rounded-full bg-[#cbcbcb]" />
  </section>
);

const issues = [
  ['KL13(1)', '第4层', '当前图元跨数为1A，属性中跨数为1'],
  ['L9(1A)', '第4层', '当前图元跨数为1，属性中跨数为1A'],
  ['L7(1)', '第4层', '未使用的梁标注'],
  ['梁边线1', '第4层', '未使用的梁边线'],
  ['梁边线2', '第4层', '未使用的梁边线'],
];

const CheckDialog = () => (
  <div role="dialog" aria-label="校核梁图元" className="absolute top-[291px] left-[657px] flex w-[603px] flex-col bg-[#f0f0f0] shadow-[2px_3px_5px_rgba(0,0,0,0.6)]">
    <div className="flex h-[33px] items-center justify-between bg-[#2b7fe2] pr-3 pl-[11px] text-white">
      <h2>校核梁图元</h2>
      <button aria-label="关闭"><Cross className="size-[10px] text-white" /></button>
    </div>
    <div className="flex h-[43px] items-center gap-2.5 pt-[7px] pl-[17px]">
      {['梁跨不匹配', '未使用的梁线', '未使用的标注', '缺少截面'].map((c) => <Check key={c} label={c} />)}
    </div>
    <div className="mx-[15px] h-[293px] border border-[#c3c5c8] bg-white">
      <table className="w-[514px] table-fixed border-collapse">
        <colgroup><col className="w-28" /><col className="w-[113px]" /><col /></colgroup>
        <thead>
          <tr className="h-[26px] bg-[#80bbfa] text-white">
            <th className="border-r border-b border-[#b5c7da] font-medium">名称</th>
            <th className="border-b border-[#b5c7da] font-medium">楼层</th>
            <th className="border-b border-[#b5c7da] font-medium">问题描述</th>
          </tr>
        </thead>
        <tbody>
          {issues.map(([a, b, c], i) => (
            <tr key={a} className={`h-6 ${i === 1 ? 'bg-[#3396ff] text-white outline-2 -outline-offset-1 outline-[#7c8086]' : ''}`}>
              <td className="pl-1">{a}</td><td className="pl-1">{b}</td><td className="pl-1">{c}</td>
            </tr>
          ))}
        </tbody>
      </table>
    </div>
    <div className="flex justify-end gap-2 px-[15px] pt-2 pb-[14px]">
      <button className="h-[33px] w-[100px] rounded-sm border border-[#c5cad6] bg-[#f3f3f3] text-[#333]">编辑支座</button>
      <button className="h-[33px] w-[100px] rounded-sm bg-[#2b7fe2] text-white">刷新</button>
    </div>
    <svg viewBox="0 0 12 12" className="absolute right-1 bottom-1 size-3" aria-hidden="true">
      <path d="M9 1h2v2H9zM9 5h2v2H9zM9 9h2v2H9zM5 5h2v2H5zM5 9h2v2H5zM1 9h2v2H1z" fill="#6d737b" />
    </svg>
  </div>
);

const tool = 'flex h-[31px] items-center justify-center border border-[#9fa1a4] bg-[#cdcdcf]';

const StatusBar = () => (
  <footer className="flex h-[38px] shrink-0 items-center border-t border-[#c6c7c9] bg-[#dddddf] pr-[15px] whitespace-nowrap text-[#4a4a4a]">
    <span className="w-[328px]">X = 20042 Y = 22619</span>
    <span className="w-[104px]">层高： 3</span>
    <span className="w-[167px]">标高： 8.95~11.95</span>
    <span className="w-[128px]">1(2)</span>
    <span className="w-[129px]">隐藏：0</span>
    <button aria-label="正交" className={`w-[31px] ${tool}`}><Ico><path d="M3 2v15h15M3 11h5v5" stroke="#444" /></Ico></button>
    <button aria-label="捕捉" className="ml-1 flex h-[31px] w-[45px] items-center justify-center gap-2 border-2 border-[#3f97f5] bg-white"><Ico><path d="M3 3h15v15H3z" stroke={B} /><path d="M0 0h6v6H0z" fill="#f7a36b" stroke={O} /></Ico><Arrow className="h-1 w-1.5 text-[#555]" /></button>
    <button aria-label="交点" className={`ml-[7px] w-8 ${tool}`}><Ico><path d="M1 1l18 18M19 1L1 19" stroke="#8d8d8d" /><circle cx="10" cy="10" r="2" fill="#999" /></Ico></button>
    <button aria-label="角度" className={`ml-[7px] w-[45px] gap-2 ${tool}`}><Ico><path d="M15 3L1 17h18" stroke="#444" /><circle cx="9" cy="9" r="2.300" fill="#333" /></Ico><Arrow className="h-1 w-1.5 text-[#555]" /></button>
    <button aria-label="输入" className={`ml-1 w-[45px] gap-2 ${tool}`}><Ico><path d="M1 5h7M4.500 1.500v7" stroke="#444" /><path d="M8 12h12v5H8z" fill="#333" /></Ico><Arrow className="h-1 w-1.5 text-[#555]" /></button>
    <button className={`ml-[3px] w-[92px] ${tool}`}>跨图层选择</button>
    <button className={`ml-1 w-[76px] ${tool}`}>折线选择</button>
    <span className="ml-[7px] flex-1">按鼠标左键指定第一个角点，或拾取构件图元</span>
    <span>333.333 FPS</span>
  </footer>
);

export default function App() {
  return (
    <div className="relative flex h-screen flex-col overflow-hidden bg-white font-['Noto_Sans','Noto_Sans_CJK_SC',sans-serif] text-[15px] leading-5 text-[#1c1c1c]">
      <TopBar />
      <Ribbon />
      <PickerBar />
      <main className="flex min-h-0 flex-1">
        <NavTree />
        <div className="ml-[5px] flex w-[346px] shrink-0 flex-col gap-1.5">
          <ComponentList />
          <PropertyList />
        </div>
        <div className="ml-[6px] flex min-w-0 flex-1 flex-col">
          <Workspace />
          <div className="h-1.5 shrink-0 bg-white"><div className="flex h-full w-[689px] justify-end bg-[#5f6b76] pr-[58px]"><Arrow className="h-[5px] w-2 text-[#cfd4d8]" /></div></div>
          <BottomPanel />
        </div>
      </main>
      <StatusBar />
      <CheckDialog />
    </div>
  );
}
